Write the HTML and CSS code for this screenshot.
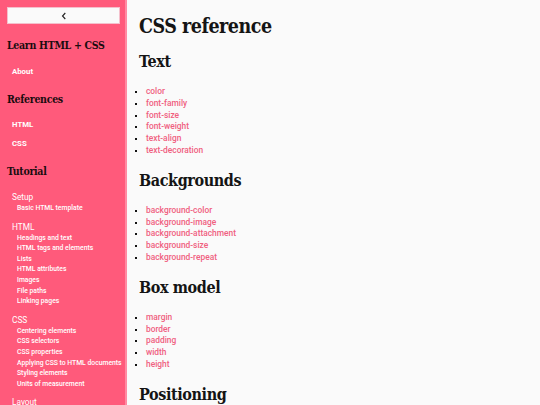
FILE: index.html
```html
<!DOCTYPE html>
<html lang="en">
<head>
<meta charset="UTF-8" />
<meta name="viewport" content="width=device-width, initial-scale=1.0"/>
<title>CSS reference</title>
<link rel="stylesheet" href="styles.css">
</head>
<body>

<div class="layout">
    <nav class="sidebar">
        <button class="toggle" aria-label="Collapse menu">
            <svg width="8" height="8" viewBox="0 0 8 8"><path d="M5.3 1 L2.5 4 L5.3 7" fill="none" stroke="#222" stroke-width="1.1"/></svg>
        </button>

        <h2 class="nav-title">Learn HTML + CSS</h2>
        <ul class="nav-list">
            <li><a href="#">About</a></li>
        </ul>

        <h2 class="nav-title">References</h2>
        <ul class="nav-list">
            <li><a href="#">HTML</a></li>
            <li><a href="#">CSS</a></li>
        </ul>

        <h2 class="nav-title">Tutorial</h2>
        <div class="nav-group">
            <h3>Setup</h3>
            <ul>
                <li><a href="#">Basic HTML template</a></li>
            </ul>
        </div>
        <div class="nav-group">
            <h3>HTML</h3>
            <ul>
                <li><a href="#">Headings and text</a></li>
                <li><a href="#">HTML tags and elements</a></li>
                <li><a href="#">Lists</a></li>
                <li><a href="#">HTML attributes</a></li>
                <li><a href="#">Images</a></li>
                <li><a href="#">File paths</a></li>
                <li><a href="#">Linking pages</a></li>
            </ul>
        </div>
        <div class="nav-group">
            <h3>CSS</h3>
            <ul>
                <li><a href="#">Centering elements</a></li>
                <li><a href="#">CSS selectors</a></li>
                <li><a href="#">CSS properties</a></li>
                <li><a href="#">Applying CSS to HTML documents</a></li>
                <li><a href="#">Styling elements</a></li>
                <li><a href="#">Units of measurement</a></li>
            </ul>
        </div>
        <div class="nav-group">
            <h3>Layout</h3>
        </div>
    </nav>

    <main class="content">
        <h1>CSS reference</h1>

        <h2>Text</h2>
        <ul>
            <li><a href="#">color</a></li>
            <li><a href="#">font-family</a></li>
            <li><a href="#">font-size</a></li>
            <li><a href="#">font-weight</a></li>
            <li><a href="#">text-align</a></li>
            <li><a href="#">text-decoration</a></li>
        </ul>

        <h2>Backgrounds</h2>
        <ul>
            <li><a href="#">background-color</a></li>
            <li><a href="#">background-image</a></li>
            <li><a href="#">background-attachment</a></li>
            <li><a href="#">background-size</a></li>
            <li><a href="#">background-repeat</a></li>
        </ul>

        <h2>Box model</h2>
        <ul>
            <li><a href="#">margin</a></li>
            <li><a href="#">border</a></li>
            <li><a href="#">padding</a></li>
            <li><a href="#">width</a></li>
            <li><a href="#">height</a></li>
        </ul>

        <h2>Positioning</h2>
    </main>
</div>

</body>
</html>
```

FILE: styles.css
```css
:root {
    --heading-font: 'DejaVu Serif Condensed', 'DejaVu Serif', serif;
    --body-font: Roboto, 'Noto Sans', sans-serif;
    --pink: #ff5a7b;
    --pink-edge: #ff8aa2;
    --link: #f0607f;
    --text: #141414;
    --bg: #fafafa;
}

html, body {
    margin: 0;
    height: 100%;
    overflow: hidden;
}

body {
    background: var(--bg);
    color: var(--text);
    font-family: var(--body-font);
}

.layout {
    display: flex;
    height: 100%;
}

/* Sidebar */
.sidebar {
    width: 127px;
    flex-shrink: 0;
    background: var(--pink);
    border-right: 2px solid var(--pink-edge);
    padding: 7px 6px 0 7px;
    box-sizing: border-box;
    overflow: hidden;
}

.toggle {
    display: flex;
    align-items: center;
    justify-content: center;
    width: 113px;
    height: 17px;
    padding: 0;
    background: #fafafa;
    border: 1px solid #f4c0cc;
    cursor: pointer;
}

.nav-title {
    font-family: var(--heading-font);
    font-stretch: condensed;
    font-size: 10.5px;
    font-weight: 700;
    margin: 14px 0 0;
    line-height: 14px;
    color: #1a0c0f;
    white-space: nowrap;
    letter-spacing: -0.3px;
}

.nav-list {
    list-style: none;
    margin: 9.5px 0 0;
    padding: 0 0 0 5px;
    font-size: 7.8px;
}

.nav-list + .nav-title {
    margin-top: 11px;
}

.nav-list li {
    line-height: 19px;
}

.nav-list a {
    color: #fff;
    font-weight: 700;
    text-decoration: none;
}

.nav-group {
    margin: 0 0 0 5px;
}

.nav-title + .nav-group {
    margin-top: 13px;
}

.nav-group h3 {
    margin: 0;
    font-size: 8.3px;
    font-weight: 400;
    color: #fff;
    line-height: 12px;
}

.nav-group ul {
    list-style: none;
    margin: 0 0 7px;
    padding: 0 0 0 5px;
    font-size: 6.8px;
}

.nav-group li {
    line-height: 10.6px;
}

.nav-group a {
    color: #fff;
    font-weight: 500;
    text-decoration: none;
    white-space: nowrap;
}

/* Main content */
.content {
    padding: 13px 0 0 12px;
}

.content h1 {
    font-family: var(--heading-font);
    font-stretch: condensed;
    font-size: 19.5px;
    font-weight: 700;
    margin: 0 0 10px;
    line-height: 28px;
    letter-spacing: -0.5px;
}

.content h2 {
    font-family: var(--heading-font);
    font-stretch: condensed;
    font-size: 16px;
    font-weight: 700;
    margin: 0 0 13px;
    line-height: 22px;
    letter-spacing: -0.4px;
}

.content ul {
    margin: 0 0 13px;
    padding: 0 0 0 7px;
    list-style: square;
    font-size: 8.4px;
}

.content li {
    line-height: 11.8px;
}

.content li::marker {
    font-size: 6px;
    color: var(--text);
}

.content a {
    color: var(--link);
    font-weight: 500;
    text-decoration: none;
}
```
